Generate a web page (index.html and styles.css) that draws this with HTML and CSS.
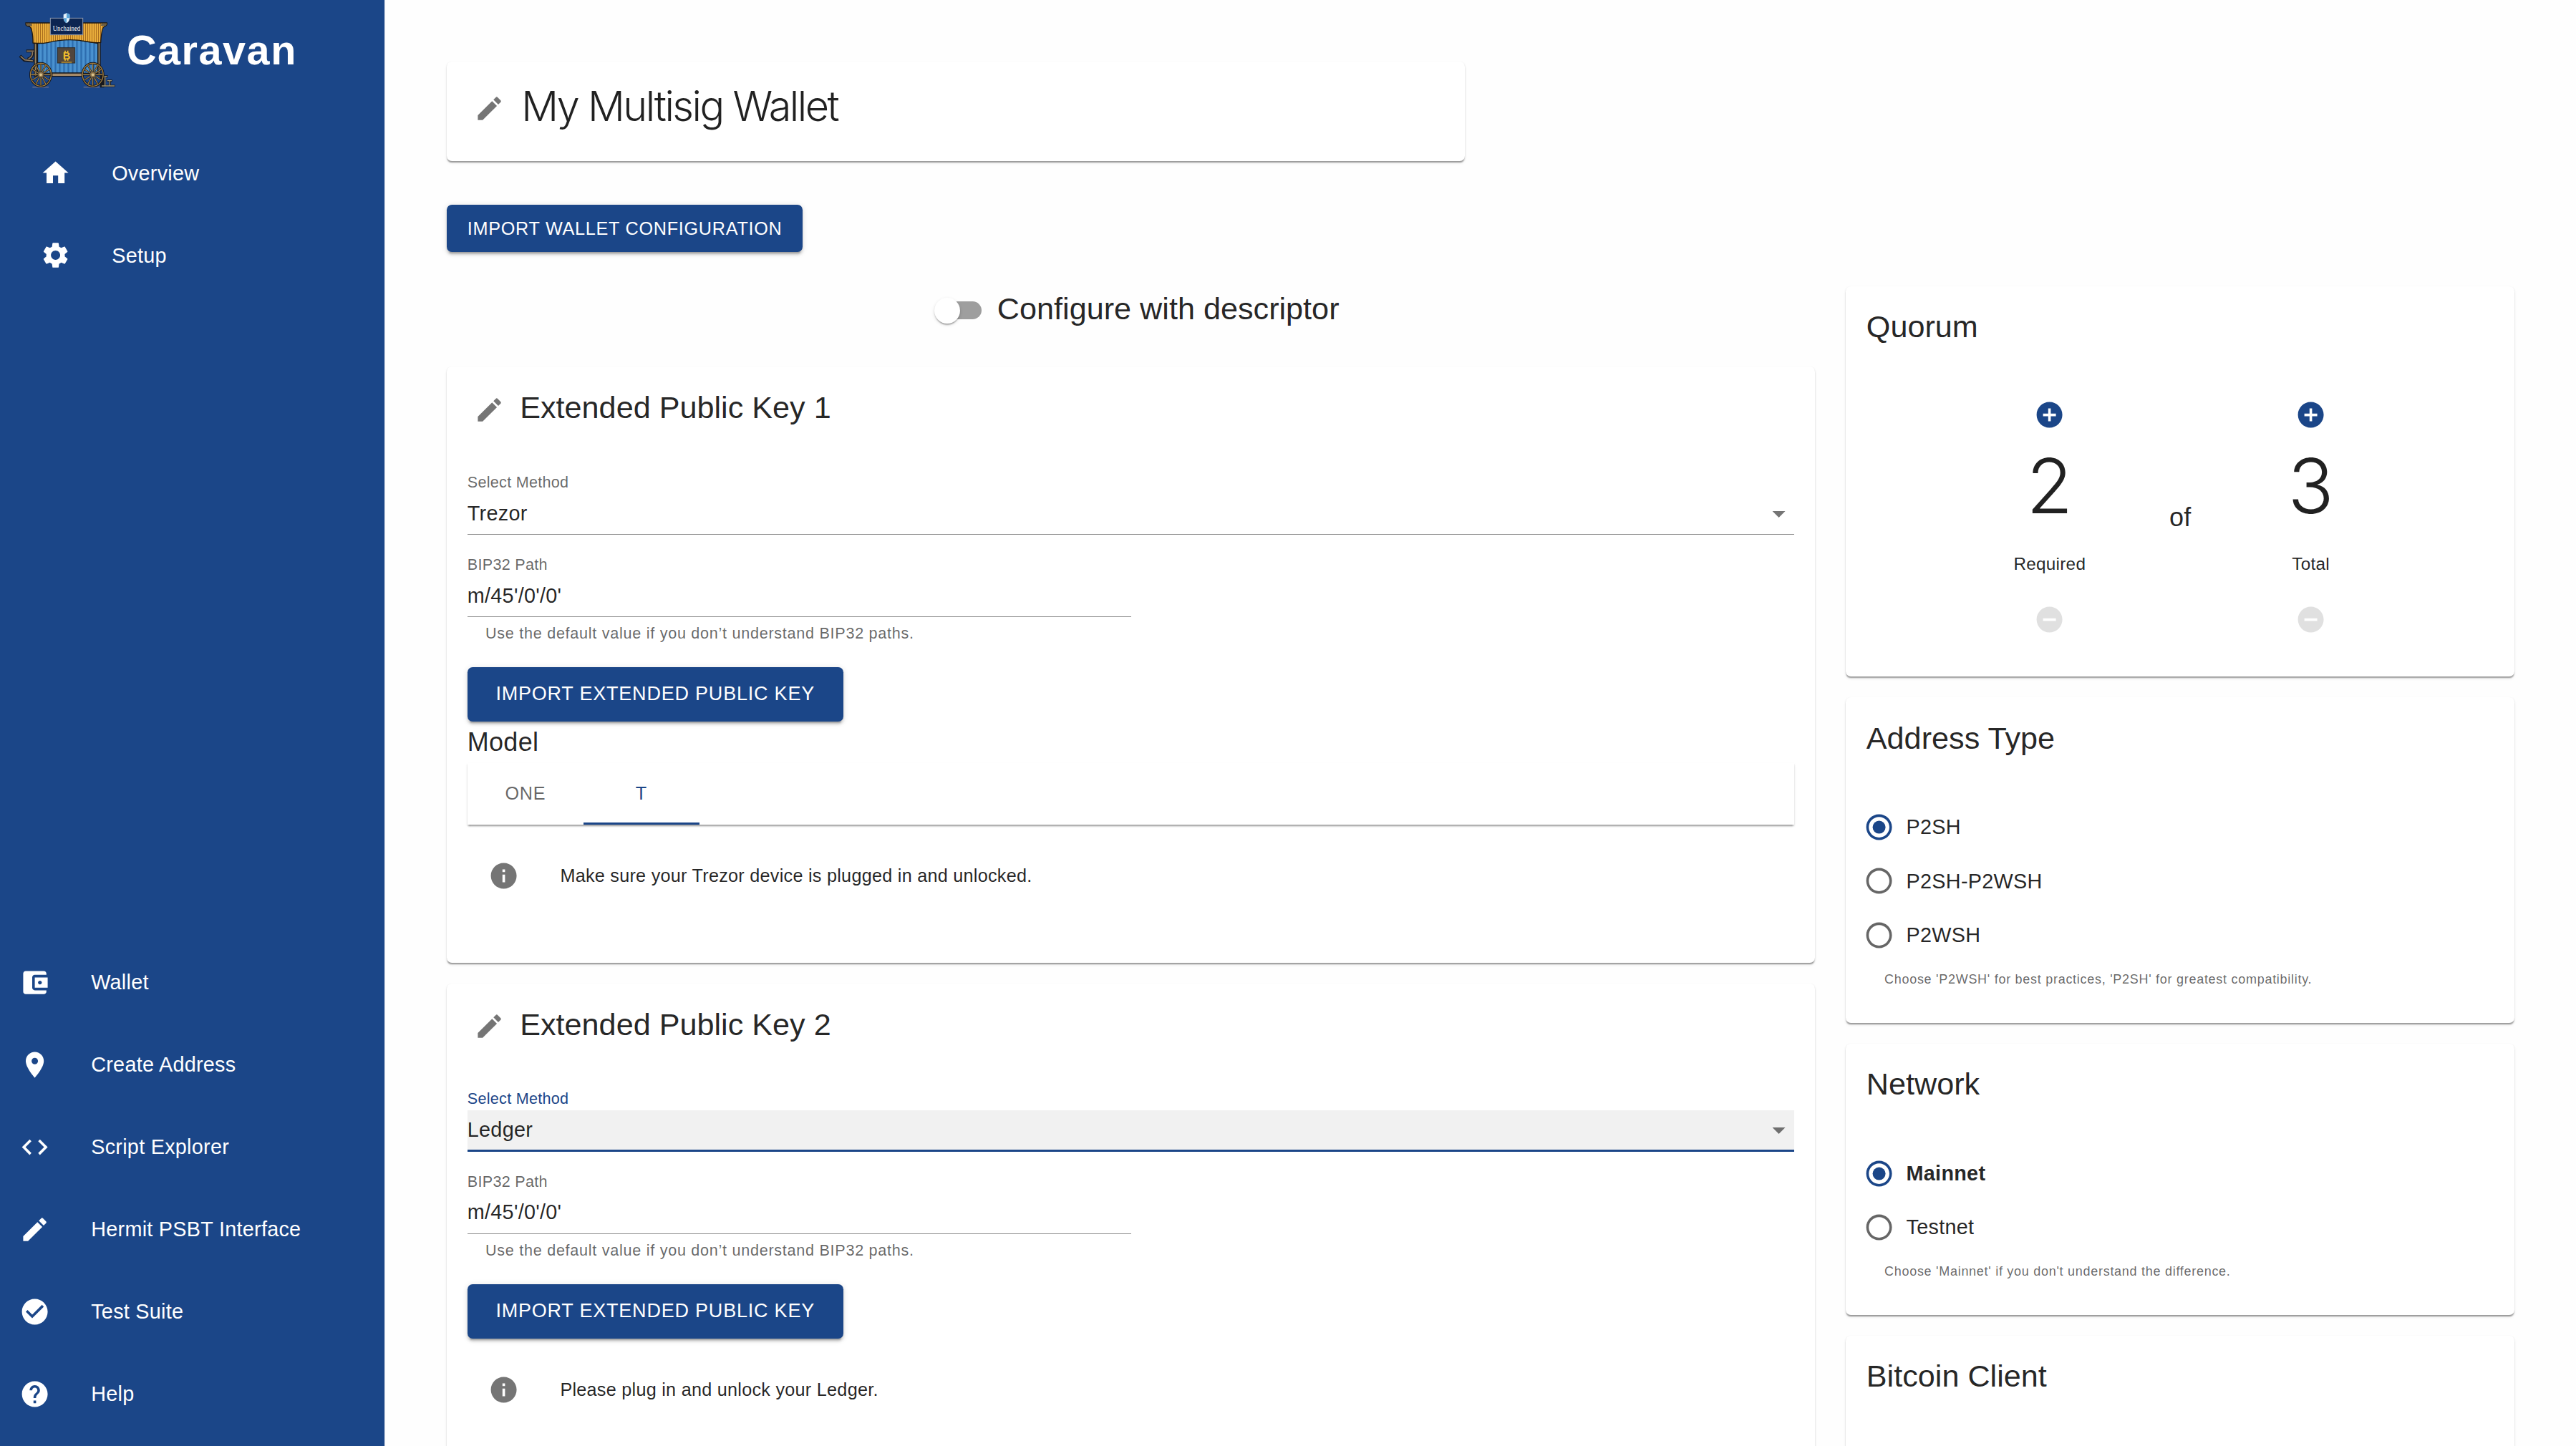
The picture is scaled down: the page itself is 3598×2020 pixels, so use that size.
FILE: index.html
```html
<!DOCTYPE html>
<html lang="en">
<head>
<meta charset="utf-8">
<title>Caravan</title>
<link rel="stylesheet" href="styles.css">
</head>
<body>
<svg class="sprite" aria-hidden="true">
  <symbol id="edit" viewBox="0 0 24 24"><path d="M3 17.25V21h3.75L17.81 9.94l-3.75-3.75L3 17.25zM20.71 7.04c.39-.39.39-1.02 0-1.41l-2.34-2.34a.9959.9959 0 0 0-1.41 0l-1.83 1.83 3.75 3.75 1.83-1.83z"/></symbol>
  <symbol id="info" viewBox="0 0 24 24"><path d="M12 2C6.48 2 2 6.48 2 12s4.48 10 10 10 10-4.48 10-10S17.52 2 12 2zm1 15h-2v-6h2v6zm0-8h-2V7h2v2z"/></symbol>
  <symbol id="plus" viewBox="0 0 24 24"><path d="M12 2C6.48 2 2 6.48 2 12s4.48 10 10 10 10-4.48 10-10S17.52 2 12 2zm5 11h-4v4h-2v-4H7v-2h4V7h2v4h4v2z"/></symbol>
  <symbol id="minus" viewBox="0 0 24 24"><path d="M12 2C6.48 2 2 6.48 2 12s4.48 10 10 10 10-4.48 10-10S17.52 2 12 2zm5 11H7v-2h10v2z"/></symbol>
  <symbol id="arrow" viewBox="0 0 24 24"><path d="M7 10l5 5 5-5z"/></symbol>
  <symbol id="radio-off" viewBox="0 0 24 24"><path d="M12 2C6.48 2 2 6.48 2 12s4.48 10 10 10 10-4.48 10-10S17.52 2 12 2zm0 18c-4.42 0-8-3.58-8-8s3.58-8 8-8 8 3.58 8 8-3.58 8-8 8z"/></symbol>
  <symbol id="radio-on" viewBox="0 0 24 24"><path d="M12 2C6.48 2 2 6.48 2 12s4.48 10 10 10 10-4.48 10-10S17.52 2 12 2zm0 18c-4.42 0-8-3.58-8-8s3.58-8 8-8 8 3.58 8 8-3.58 8-8 8z"/><circle cx="12" cy="12" r="5"/></symbol>
  <symbol id="wheel" viewBox="-52 -56 104 112">
    <ellipse rx="46" ry="51" fill="none" stroke="#15161c" stroke-width="10"/>
    <ellipse rx="46" ry="51" fill="none" stroke="#a8823f" stroke-width="4"/>
    <g stroke="#1a1a1e" stroke-width="7"><path d="M0-48V48M-43 0H43M-22-42L22 42M22-42L-22 42M-38-24L38 24M38-24L-38 24"/></g>
    <g stroke="#b08a45" stroke-width="3.5"><path d="M0-48V48M-43 0H43M-22-42L22 42M22-42L-22 42M-38-24L38 24M38-24L-38 24"/></g>
    <circle r="13" fill="#8d744c" stroke="#222" stroke-width="2"/><circle r="6" fill="#dcc38a"/>
  </symbol>
</svg>

<nav class="sidebar">
  <header class="brand">
    <svg class="logo" viewBox="0 0 450 375">
      <defs>
        <pattern id="thatch" width="9" height="20" patternUnits="userSpaceOnUse"><rect width="9" height="20" fill="#e9ae3c"/><rect width="3" height="20" fill="#a86c1d"/></pattern>
        <pattern id="boards" x="97" width="18" height="20" patternUnits="userSpaceOnUse"><rect width="18" height="20" fill="#4a92d0"/><rect width="7" height="20" fill="#2c6cae"/></pattern>
      </defs>
      <path d="M24 204l18 18 38 4M50 184h36M76 186c3 20-6 28-20 32" fill="none" stroke="#16171c" stroke-width="12"/>
      <path d="M26 206l18 15 34 4M52 184h32M76 188c2 17-6 24-17 29" fill="none" stroke="#8f7b61" stroke-width="5"/>
      <path d="M84 140h10v150h-10zM350 140h10v140h-10z" fill="#9a8460" stroke="#17181d" stroke-width="4"/>
      <path d="M97 152q123-34 253 0v125H97z" fill="url(#boards)" stroke="#17181d" stroke-width="4"/>
      <path d="M158 276h128v14H158z" fill="#a58a69" stroke="#17181d" stroke-width="4"/>
      <path d="M48 66h340q3 8-8 14-14 0-18 68-24 4-60-4-78-16-160 4-30 6-64 2 0-56-14-70-18 2-16-14z" fill="url(#thatch)" stroke="#20180f" stroke-width="4"/>
      <path d="M48 68h22l4 10H54zM388 68h-22l-4 10h20z" fill="#6c6048"/>
      <rect x="181" y="170" width="73" height="64" fill="#51463c" stroke="#2e2a29" stroke-width="3"/>
      <rect x="197" y="229" width="44" height="4" fill="#c8992f"/>
      <text x="219" y="218" text-anchor="middle" class="logo-coin">B</text>
      <path d="M213 182v7M224 182v7M213 217v7M224 217v7" stroke="#f1bf2d" stroke-width="5"/>
      <rect x="151" y="46" width="136" height="70" fill="#0c2551" stroke="#8e9aae" stroke-width="3"/>
      <text x="219" y="100" text-anchor="middle" textLength="116" lengthAdjust="spacingAndGlyphs" class="logo-sign">Unchained</text>
      <path d="M206 31l13-6 13 6v16q-2 14-13 20-11-6-13-20z" fill="#e4f1fa"/>
      <path d="M219 25l13 6v15h-13zM206 46h13v21q-11-6-13-20z" fill="#5aa5da"/>
      <path d="M364 282h8v50h-8zM374 290h18M378 292v38M388 308h22M400 310v20M364 330h58" fill="#8d8065" stroke="#17181d" stroke-width="9"/>
      <path d="M376 290h14M390 308h18M380 292v38M400 310v18M366 330h54" fill="none" stroke="#9d906f" stroke-width="4"/>
      <path d="M76 335h68M290 335h68" stroke="#6c6f8a" stroke-width="6" opacity=".7"/>
      <use href="#wheel" x="62" y="226" width="98" height="114"/>
      <use href="#wheel" x="280" y="226" width="98" height="114"/>
    </svg>
    <h1 class="brand-name">Caravan</h1>
  </header>
  <ul class="nav nav-top">
    <li class="nav-item"><svg class="icon" viewBox="0 0 24 24"><path d="M10 20v-6h4v6h5v-8h3L12 3 2 12h3v8z"/></svg><span>Overview</span></li>
    <li class="nav-item"><svg class="icon" viewBox="0 0 24 24"><path d="M19.14 12.94c.04-.3.06-.61.06-.94 0-.32-.02-.64-.07-.94l2.03-1.58c.18-.14.23-.41.12-.61l-1.92-3.32c-.12-.22-.37-.29-.59-.22l-2.39.96c-.5-.38-1.03-.7-1.62-.94l-.36-2.54c-.04-.24-.24-.41-.48-.41h-3.84c-.24 0-.43.17-.47.41l-.36 2.54c-.59.24-1.13.57-1.62.94l-2.39-.96c-.22-.08-.47 0-.59.22L2.74 8.87c-.12.21-.08.47.12.61l2.03 1.58c-.05.3-.09.63-.09.94s.02.64.07.94l-2.03 1.58c-.18.14-.23.41-.12.61l1.92 3.32c.12.22.37.29.59.22l2.39-.96c.5.38 1.03.7 1.62.94l.36 2.54c.05.24.24.41.48.41h3.84c.24 0 .44-.17.47-.41l.36-2.54c.59-.24 1.13-.56 1.62-.94l2.39.96c.22.08.47 0 .59-.22l1.92-3.32c.12-.22.07-.47-.12-.61l-2.01-1.58zM12 15.6c-1.98 0-3.6-1.62-3.6-3.6s1.62-3.6 3.6-3.6 3.6 1.62 3.6 3.6-1.62 3.6-3.6 3.6z"/></svg><span>Setup</span></li>
  </ul>
  <ul class="nav nav-bottom">
    <li class="nav-item"><svg class="icon" viewBox="0 0 24 24"><path d="M21 18v1c0 1.1-.9 2-2 2H5c-1.11 0-2-.9-2-2V5c0-1.1.89-2 2-2h14c1.1 0 2 .9 2 2v1h-9c-1.11 0-2 .9-2 2v8c0 1.1.89 2 2 2h9zm-9-2h10V8H12v8zm4-2.5c-.83 0-1.5-.67-1.5-1.5s.67-1.5 1.5-1.5 1.5.67 1.5 1.5-.67 1.5-1.5 1.5z"/></svg><span>Wallet</span></li>
    <li class="nav-item"><svg class="icon" viewBox="0 0 24 24"><path d="M12 2C8.13 2 5 5.13 5 9c0 5.25 7 13 7 13s7-7.75 7-13c0-3.87-3.13-7-7-7zm0 9.5c-1.38 0-2.5-1.12-2.5-2.5s1.12-2.5 2.5-2.5 2.5 1.12 2.5 2.5-1.12 2.5-2.5 2.5z"/></svg><span>Create Address</span></li>
    <li class="nav-item"><svg class="icon" viewBox="0 0 24 24"><path d="M9.4 16.6L4.8 12l4.6-4.6L8 6l-6 6 6 6 1.4-1.4zm5.2 0l4.6-4.6-4.6-4.6L16 6l6 6-6 6-1.4-1.4z"/></svg><span>Script Explorer</span></li>
    <li class="nav-item"><svg class="icon"><use href="#edit"/></svg><span>Hermit PSBT Interface</span></li>
    <li class="nav-item"><svg class="icon" viewBox="0 0 24 24"><path d="M12 2C6.48 2 2 6.48 2 12s4.48 10 10 10 10-4.48 10-10S17.52 2 12 2zm-2 15l-5-5 1.41-1.41L10 14.17l7.59-7.59L19 8l-9 9z"/></svg><span>Test Suite</span></li>
    <li class="nav-item"><svg class="icon" viewBox="0 0 24 24"><path d="M12 2C6.48 2 2 6.48 2 12s4.48 10 10 10 10-4.48 10-10S17.52 2 12 2zm1 17h-2v-2h2v2zm2.07-7.75l-.9.92C13.45 12.9 13 13.5 13 15h-2v-.5c0-1.1.45-2.1 1.17-2.83l1.24-1.26c.37-.36.59-.86.59-1.41 0-1.1-.9-2-2-2s-2 .9-2 2H8c0-2.21 1.79-4 4-4s4 1.79 4 4c0 .88-.36 1.68-.93 2.25z"/></svg><span>Help</span></li>
  </ul>
</nav>

<main class="main">
  <section class="card wallet-name">
    <svg class="icon edit-icon"><use href="#edit"/></svg>
    <h2 class="wallet-title">My Multisig Wallet</h2>
  </section>
  <button class="btn">IMPORT WALLET CONFIGURATION</button>

  <div class="columns">
    <div class="keys">
      <label class="toggle"><span class="switch"><span class="track"></span><span class="knob"></span></span><span class="toggle-label">Configure with descriptor</span></label>

      <section class="card key key-first">
        <header class="card-head"><svg class="icon edit-icon"><use href="#edit"/></svg><h3 class="card-title">Extended Public Key 1</h3></header>
        <div class="field">
          <div class="field-label">Select Method</div>
          <div class="field-input select"><span>Trezor</span><svg class="icon"><use href="#arrow"/></svg></div>
        </div>
        <div class="field field-half">
          <div class="field-label">BIP32 Path</div>
          <div class="field-input">m/45'/0'/0'</div>
        </div>
        <p class="helper">Use the default value if you don’t understand BIP32 paths.</p>
        <button class="btn btn-large">IMPORT EXTENDED PUBLIC KEY</button>
        <h4 class="model">Model</h4>
        <div class="tabs"><div class="tab">ONE</div><div class="tab tab-active">T</div></div>
        <div class="note"><svg class="icon"><use href="#info"/></svg><span>Make sure your Trezor device is plugged in and unlocked.</span></div>
      </section>

      <section class="card key">
        <header class="card-head"><svg class="icon edit-icon"><use href="#edit"/></svg><h3 class="card-title">Extended Public Key 2</h3></header>
        <div class="field field-focused">
          <div class="field-label">Select Method</div>
          <div class="field-input select"><span>Ledger</span><svg class="icon"><use href="#arrow"/></svg></div>
        </div>
        <div class="field field-half">
          <div class="field-label">BIP32 Path</div>
          <div class="field-input">m/45'/0'/0'</div>
        </div>
        <p class="helper">Use the default value if you don’t understand BIP32 paths.</p>
        <button class="btn btn-large">IMPORT EXTENDED PUBLIC KEY</button>
        <div class="note"><svg class="icon"><use href="#info"/></svg><span>Please plug in and unlock your Ledger.</span></div>
      </section>
    </div>

    <aside class="settings">
      <section class="card quorum">
        <header class="card-head"><h3 class="card-title">Quorum</h3></header>
        <div class="counters">
          <div class="counter">
            <span class="step step-plus"><svg class="icon"><use href="#plus"/></svg></span>
            <span class="count">2</span>
            <span class="count-label">Required</span>
            <span class="step step-minus"><svg class="icon"><use href="#minus"/></svg></span>
          </div>
          <div class="of">of</div>
          <div class="counter">
            <span class="step step-plus"><svg class="icon"><use href="#plus"/></svg></span>
            <span class="count">3</span>
            <span class="count-label">Total</span>
            <span class="step step-minus"><svg class="icon"><use href="#minus"/></svg></span>
          </div>
        </div>
      </section>

      <section class="card options">
        <header class="card-head"><h3 class="card-title">Address Type</h3></header>
        <div class="radios">
          <label class="radio radio-checked"><svg class="icon"><use href="#radio-on"/></svg><span>P2SH</span></label>
          <label class="radio"><svg class="icon"><use href="#radio-off"/></svg><span>P2SH-P2WSH</span></label>
          <label class="radio"><svg class="icon"><use href="#radio-off"/></svg><span>P2WSH</span></label>
        </div>
        <p class="hint">Choose 'P2WSH' for best practices, 'P2SH' for greatest compatibility.</p>
      </section>

      <section class="card options">
        <header class="card-head"><h3 class="card-title">Network</h3></header>
        <div class="radios">
          <label class="radio radio-checked"><svg class="icon"><use href="#radio-on"/></svg><strong>Mainnet</strong></label>
          <label class="radio"><svg class="icon"><use href="#radio-off"/></svg><span>Testnet</span></label>
        </div>
        <p class="hint">Choose 'Mainnet' if you don't understand the difference.</p>
      </section>

      <section class="card client">
        <header class="card-head"><h3 class="card-title">Bitcoin Client</h3></header>
      </section>
    </aside>
  </div>
</main>
</body>
</html>
```
FILE: styles.css
```css
:root {
  --blue: #1b4688;
  --ink: rgba(0, 0, 0, .87);
  --muted: rgba(0, 0, 0, .6);
  --icon: rgba(0, 0, 0, .54);
  --raised: 0 3.6px 1.8px -1.8px rgba(0, 0, 0, .24), 0 1.8px 1.8px rgba(0, 0, 0, .16), 0 2.4px 4px rgba(0, 0, 0, .07);
}

* { box-sizing: border-box; margin: 0; padding: 0; }

body {
  display: flex;
  height: 2020px;
  overflow: hidden;
  background: #fefefe;
  color: var(--ink);
  font-family: "Liberation Sans", Arial, sans-serif;
  font-size: 28.8px;
  letter-spacing: .00938em;
}

.sprite { position: absolute; width: 0; height: 0; }
.icon { width: 43.2px; height: 43.2px; flex: none; fill: currentColor; display: block; }

/* Sidebar */
.sidebar {
  flex: none;
  width: 538px;
  height: 2020px;
  display: flex;
  flex-direction: column;
  padding-bottom: 15px;
  background: var(--blue);
  border-right: 1px solid #dfe3ea;
  color: #fff;
}
.brand { display: flex; align-items: flex-start; height: 184.5px; padding: 10px 0 0 20px; }
.logo { width: 150px; height: 125px; }
.logo-coin { font: bold 44px "Liberation Sans", sans-serif; fill: #f1bf2d; }
.logo-sign { font: 28px "Liberation Serif", serif; fill: #fff; }
.brand-name {
  margin: 26.5px 0 0 7px;
  font-size: 57.6px;
  line-height: 66px;
  letter-spacing: 1.5px;
}
.nav { list-style: none; }
.nav-top { padding-left: 56px; }
.nav-bottom { margin-top: auto; padding-left: 27px; }
.nav-item { display: flex; align-items: center; gap: 57px; height: 115px; }

/* Surfaces */
.main { flex: 1; height: 2020px; overflow: hidden; padding: 86.4px 0 0 86px; }
.card { background: #fff; border-radius: 7.2px; box-shadow: var(--raised); }
.card-head { display: flex; align-items: center; height: 115.2px; }
.card-title { font-size: 43.2px; font-weight: 400; line-height: 57.6px; letter-spacing: 0; }
.edit-icon { margin: 5px 21.4px 0 8.8px; color: var(--icon); }

.wallet-name { display: flex; align-items: center; width: 1421.6px; height: 138.6px; padding: 0 28.8px 13px; }
.wallet-title {
  margin-left: 2px;
  padding-bottom: 3px;
  font-family: Inter, "Liberation Sans", sans-serif;
  font-size: 57.6px;
  font-weight: 300;
  line-height: 68px;
  letter-spacing: -2.5px;
}

.btn {
  display: block;
  border: 0;
  border-radius: 7.2px;
  padding: 10.8px 28.8px;
  background: var(--blue);
  color: #fff;
  font: 25.2px/44.1px "Liberation Sans", Arial, sans-serif;
  letter-spacing: .0292em;
  white-space: nowrap;
  box-shadow: 0 5.4px 1.8px -3.6px rgba(0, 0, 0, .2), 0 3.6px 3.6px rgba(0, 0, 0, .14), 0 1.8px 9px rgba(0, 0, 0, .12);
}
.wallet-name + .btn { margin-top: 61px; }
.btn-large { padding: 14.4px 39.6px; font-size: 27px; line-height: 47.25px; }

.columns { display: grid; grid-template-columns: 1911px 934.4px; gap: 43px; margin-top: 48px; align-items: start; }

/* Key column */
.toggle { display: flex; justify-content: center; align-items: center; height: 68.4px; margin-bottom: 44px; }
.toggle-label { padding-bottom: 4px; font-size: 43.2px; letter-spacing: 0; line-height: 57.6px; }
.switch { position: relative; width: 104.4px; height: 68.4px; padding: 21.6px; }
.track { display: block; height: 25.2px; border-radius: 12.6px; background: #9e9e9e; }
.knob {
  position: absolute;
  left: 16.2px;
  top: 16.2px;
  width: 36px;
  height: 36px;
  border-radius: 50%;
  background: #fff;
  box-shadow: 0 3.6px 1.8px -1.8px rgba(0, 0, 0, .2), 0 1.8px 1.8px rgba(0, 0, 0, .14), 0 1.8px 5.4px rgba(0, 0, 0, .12);
}

.key { padding: 0 28.8px; min-height: 833px; }
.key + .key { margin-top: 28.8px; }
.key .card-head { margin-bottom: 33.4px; }
.field { margin-bottom: 28.8px; }
.field-half { width: 50%; margin-bottom: 5px; }
.field-label { height: 28.8px; font-size: 21.6px; line-height: 25.2px; color: var(--muted); }
.field-input { height: 57.6px; line-height: 55.4px; border-bottom: 1px solid #8f8f8f; }
.select { display: flex; justify-content: space-between; align-items: center; }
.select .icon { color: var(--icon); }
.field-focused .field-label { color: var(--blue); }
.field-focused .field-input { background: #f1f1f1; border-bottom: 3px solid var(--blue); }
.helper { margin: 0 0 28.8px 25.2px; font-size: 21.6px; line-height: 35.9px; letter-spacing: .03333em; color: var(--muted); }
.model { font-size: 36px; font-weight: 400; line-height: 57.6px; letter-spacing: .0075em; }
.tabs { display: flex; height: 86.4px; background: #fff; box-shadow: var(--raised); }
.tab { width: 162px; font-size: 25.2px; line-height: 84px; letter-spacing: .02857em; text-align: center; color: var(--muted); }
.tab-active { color: var(--blue); border-bottom: 3.6px solid var(--blue); }
.note { display: flex; align-items: center; gap: 57.6px; height: 143.5px; padding-left: 28.8px; font-size: 25.2px; letter-spacing: .01071em; }
.note .icon { color: var(--icon); }

/* Settings column */
.settings { display: grid; gap: 28.8px; }
.settings .card { padding: 0 28.8px; }
.settings .card-head { margin-bottom: 28.6px; }
.settings .quorum { height: 545.4px; }
.counters { display: flex; justify-content: center; }
.counter { width: 182.4px; display: flex; flex-direction: column; align-items: center; }
.step { height: 72px; display: flex; align-items: center; }
.step-plus { color: var(--blue); }
.step-minus { color: #e0e0e0; }
.count { height: 129.6px; font: 300 106px/128px Inter, "Liberation Sans", sans-serif; letter-spacing: 0; }
.count-label { margin: 24.7px 0 23.4px; font-size: 24.3px; line-height: 36.4px; }
.of { width: 182.4px; padding-top: 151px; font-size: 36px; line-height: 57.6px; text-align: center; }

.radios { margin-left: -3.6px; }
.radio { display: flex; align-items: center; gap: 16.2px; height: 75.6px; }
.radio .icon { color: var(--muted); }
.radio-checked .icon { color: var(--blue); }
.hint { margin: 9.4px 0 0 25.2px; padding-bottom: 45px; font-size: 18px; line-height: 29.9px; letter-spacing: .72px; color: var(--muted); }
.client { height: 170px; }
```
